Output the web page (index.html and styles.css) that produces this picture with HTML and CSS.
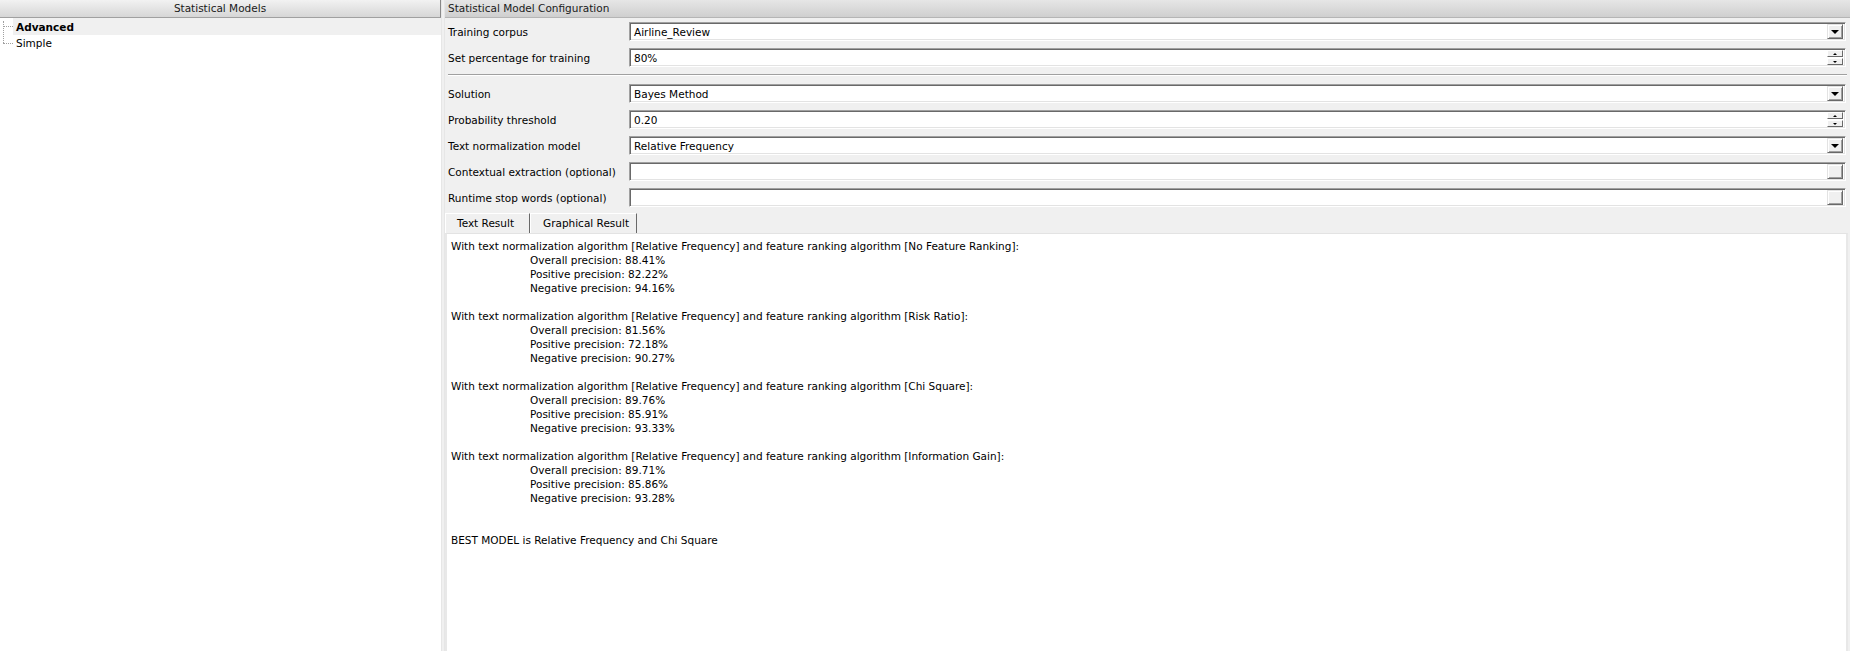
FILE: index.html
```html
<!DOCTYPE html>
<html>
<head>
<meta charset="utf-8">
<link rel="stylesheet" href="styles.css">
</head>
<body>
<div class="app">
  <div class="left">
    <div class="left-header">Statistical Models</div>
    <div class="tree">
      <div class="tree-lines"></div>
      <div class="tree-item selected"><span class="branch"></span><span class="label bold">Advanced</span></div>
      <div class="tree-item"><span class="branch last"></span><span class="label">Simple</span></div>
    </div>
  </div>
  <div class="splitter"></div>
  <div class="right">
    <div class="right-header">Statistical Model Configuration</div>
    <div class="form">
      <div class="row">
        <div class="lbl">Training corpus</div>
        <div class="field"><span class="val">Airline_Review</span><span class="dropbtn"><span class="tri"></span></span></div>
      </div>
      <div class="row">
        <div class="lbl">Set percentage for training</div>
        <div class="field"><span class="val">80%</span><span class="spin"><span class="sbtn"><span class="stri up"></span></span><span class="sbtn"><span class="stri down"></span></span></span></div>
      </div>
      <div class="sep"></div>
      <div class="row">
        <div class="lbl">Solution</div>
        <div class="field"><span class="val">Bayes Method</span><span class="dropbtn"><span class="tri"></span></span></div>
      </div>
      <div class="row">
        <div class="lbl">Probability threshold</div>
        <div class="field"><span class="val">0.20</span><span class="spin"><span class="sbtn"><span class="stri up"></span></span><span class="sbtn"><span class="stri down"></span></span></span></div>
      </div>
      <div class="row">
        <div class="lbl">Text normalization model</div>
        <div class="field"><span class="val">Relative Frequency</span><span class="dropbtn"><span class="tri"></span></span></div>
      </div>
      <div class="row">
        <div class="lbl">Contextual extraction (optional)</div>
        <div class="field"><span class="val"></span><span class="dropbtn plain"></span></div>
      </div>
      <div class="row">
        <div class="lbl">Runtime stop words (optional)</div>
        <div class="field"><span class="val"></span><span class="dropbtn plain"></span></div>
      </div>
    </div>
    <div class="tabs">
      <div class="tab tab-text">Text Result</div>
      <div class="tab tab-graph">Graphical Result</div>
    </div>
    <div class="result">
      <div class="line">With text normalization algorithm [Relative Frequency] and feature ranking algorithm [No Feature Ranking]:</div>
      <div class="line ind">Overall precision: 88.41%</div>
      <div class="line ind">Positive precision: 82.22%</div>
      <div class="line ind">Negative precision: 94.16%</div>
      <div class="line"></div>
      <div class="line">With text normalization algorithm [Relative Frequency] and feature ranking algorithm [Risk Ratio]:</div>
      <div class="line ind">Overall precision: 81.56%</div>
      <div class="line ind">Positive precision: 72.18%</div>
      <div class="line ind">Negative precision: 90.27%</div>
      <div class="line"></div>
      <div class="line">With text normalization algorithm [Relative Frequency] and feature ranking algorithm [Chi Square]:</div>
      <div class="line ind">Overall precision: 89.76%</div>
      <div class="line ind">Positive precision: 85.91%</div>
      <div class="line ind">Negative precision: 93.33%</div>
      <div class="line"></div>
      <div class="line">With text normalization algorithm [Relative Frequency] and feature ranking algorithm [Information Gain]:</div>
      <div class="line ind">Overall precision: 89.71%</div>
      <div class="line ind">Positive precision: 85.86%</div>
      <div class="line ind">Negative precision: 93.28%</div>
      <div class="line"></div>
      <div class="line"></div>
      <div class="line">BEST MODEL is Relative Frequency and Chi Square</div>
    </div>
  </div>
</div>
</body>
</html>
```

FILE: styles.css
```css
html, body {
  margin: 0;
  padding: 0;
  background: #ffffff;
}
body {
  font-family: "DejaVu Sans", Verdana, sans-serif;
  font-size: 10.5px;
  color: #000;
}
.app {
  display: flex;
  height: 651px;
  width: 1850px;
  overflow: hidden;
}
.left {
  width: 441px;
  background: #ffffff;
  display: flex;
  flex-direction: column;
}
.left-header {
  height: 17px;
  line-height: 17px;
  text-align: center;
  background: linear-gradient(#f2f2f2, #d6d6d6);
  border-bottom: 1px solid #a0a0a0;
  border-right: 1px solid #888;
  color: #1a1a1a;
}
.tree {
  position: relative;
}
.tree-lines {
  position: absolute;
  left: 3px;
  top: 3px;
  height: 22px;
  border-left: 1px dotted #a0a0a0;
}
.tree-item {
  display: flex;
  align-items: center;
  height: 16px;
}
.tree-item.selected {
  height: 17px;
}
.branch {
  width: 10px;
  margin-left: 3px;
  border-top: 1px dotted #a0a0a0;
  flex: none;
}
.tree-item .label {
  padding-left: 3px;
  flex: 1;
  height: 100%;
  display: flex;
  align-items: center;
}
.tree-item.selected .label {
  background: #f0f0f0;
}
.bold {
  font-weight: bold;
}
.splitter {
  width: 4px;
  background: #f0f0f0;
  border-left: 1px solid #e6e6e6;
  border-right: 1px solid #e6e6e6;
  box-sizing: border-box;
}
.right {
  flex: 1;
  background: #f0f0f0;
  display: flex;
  flex-direction: column;
}
.right-header {
  height: 18px;
  line-height: 17px;
  padding-left: 3px;
  background: linear-gradient(#e6e6e6, #cfcfcf);
  border-bottom: 1px solid #b5b5b5;
  box-sizing: border-box;
  color: #1a1a1a;
}
.form {
  display: flex;
  flex-direction: column;
  padding: 4px 4px 0 3px;
  gap: 7px;
}
.row {
  display: flex;
  align-items: center;
  height: 19px;
}
.lbl {
  width: 181px;
  flex: none;
  white-space: nowrap;
}
.field {
  flex: 1;
  height: 19px;
  background: #fff;
  box-sizing: border-box;
  border-top: 1px solid #a0a0a0;
  border-left: 1px solid #a0a0a0;
  border-bottom: 1px solid #ffffff;
  border-right: 1px solid #ffffff;
  box-shadow: inset 1px 1px 0 #696969, inset -1px -1px 0 #e3e3e3;
  display: flex;
  align-items: center;
  padding: 2px 2px 2px 4px;
}
.val {
  flex: 1;
  white-space: nowrap;
}
.dropbtn {
  width: 16px;
  height: 15px;
  box-sizing: border-box;
  background: #f0f0f0;
  border-top: 1px solid #e3e3e3;
  border-left: 1px solid #e3e3e3;
  border-right: 1px solid #696969;
  border-bottom: 1px solid #696969;
  box-shadow: inset 1px 1px 0 #ffffff, inset -1px -1px 0 #a0a0a0;
  display: flex;
  align-items: center;
  justify-content: center;
}
.tri {
  width: 0;
  height: 0;
  border-left: 4px solid transparent;
  border-right: 4px solid transparent;
  border-top: 4px solid #000;
  margin-top: 1px;
}
.spin {
  display: flex;
  flex-direction: column;
  width: 16px;
  height: 15px;
  gap: 1px;
}
.sbtn {
  height: 7px;
  box-sizing: border-box;
  background: #f0f0f0;
  border-top: 1px solid #ffffff;
  border-left: 1px solid #ffffff;
  border-right: 1px solid #696969;
  border-bottom: 1px solid #696969;
  display: flex;
  align-items: center;
  justify-content: center;
}
.stri {
  width: 0;
  height: 0;
  border-left: 2px solid transparent;
  border-right: 2px solid transparent;
}
.stri.up {
  border-bottom: 2px solid #000;
}
.stri.down {
  border-top: 2px solid #000;
}
.sep {
  height: 2px;
  border-top: 1px solid #a0a0a0;
  border-bottom: 1px solid #ffffff;
  box-sizing: border-box;
  margin: 0 -1px 1px 0;
}
.tabs {
  display: flex;
  margin-top: 6px;
  height: 20px;
}
.tab {
  height: 20px;
  line-height: 19px;
  box-sizing: border-box;
  border-left: 1px solid #ffffff;
  border-right: 1px solid #696969;
  border-top: 1px solid #ffffff;
  padding-left: 11px;
  white-space: nowrap;
}
.tab-text {
  width: 85px;
}
.tab-graph {
  width: 107px;
  padding-left: 12px;
}
.result {
  flex: 1;
  background: #ffffff;
  border-top: 1px solid #e3e3e3;
  border-left: 2px solid #e8e8e8;
  border-right: 2px solid #e8e8e8;
  padding: 5px 0 0 4px;
  margin-right: 2px;
}
.line {
  height: 14px;
  line-height: 14px;
  white-space: pre;
}
.line.ind {
  padding-left: 79px;
}
```
